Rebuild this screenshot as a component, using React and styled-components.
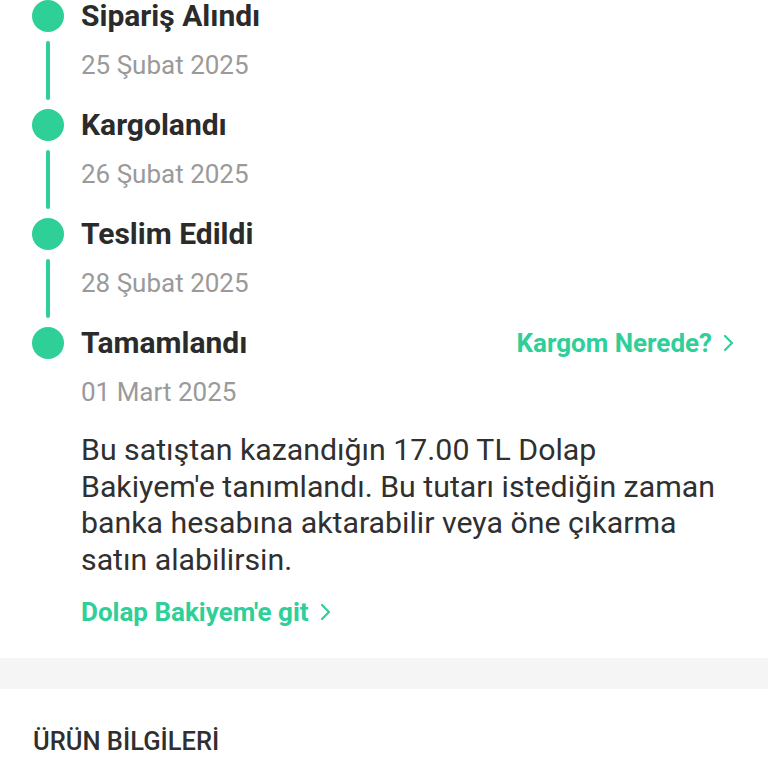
import styled, { createGlobalStyle } from "styled-components";

const green = "#2fcf98";

const GlobalStyle = createGlobalStyle`
  html, body {
    margin: 0;
    padding: 0;
    background: #ffffff;
    font-family: Roboto, "Noto Sans", "Liberation Sans", sans-serif;
  }
`;

const Page = styled.div`
  width: 768px;
  height: 768px;
  overflow: hidden;
  background: #ffffff;
`;

const Timeline = styled.section`
  padding: 0 33px 30px 32px;
`;

const Step = styled.div`
  display: grid;
  grid-template-columns: 32px 1fr;
  column-gap: 17px;
  padding-bottom: ${(p) => (p.$last ? "0" : "28px")};
`;

const Marker = styled.div`
  display: flex;
  flex-direction: column;
  align-items: center;
`;

const Dot = styled.div`
  width: 32px;
  height: 32px;
  border-radius: 50%;
  background: ${green};
  flex-shrink: 0;
`;

const Line = styled.div`
  width: 4px;
  flex: 1;
  margin: 9px 0 -19px;
  border-radius: 2px;
  background: ${green};
`;

const Content = styled.div`
  display: flex;
  flex-direction: column;
`;

const TitleRow = styled.div`
  display: flex;
  align-items: center;
  justify-content: space-between;
  height: 32px;
`;

const Title = styled.h3`
  margin: 0;
  font-size: 30px;
  font-weight: 700;
  color: #2b2b2b;
  line-height: 32px;
`;

const DateText = styled.div`
  margin-top: 17px;
  font-size: 26px;
  line-height: 32px;
  color: #9a9a9a;
`;

const LinkText = styled.a`
  display: inline-flex;
  align-items: center;
  gap: 9px;
  font-size: 26px;
  font-weight: 700;
  color: ${green};
  text-decoration: none;
  line-height: 32px;
`;

const Info = styled.p`
  margin: 24px 0 0;
  max-width: 642px;
  font-size: 30.3px;
  line-height: 36.5px;
  color: #303030;
`;

const Action = styled.div`
  margin-top: 18px;
`;

const Divider = styled.div`
  height: 31px;
  background: #f5f5f5;
`;

const SectionTitle = styled.h2`
  margin: 0;
  padding: 38px 33px 0;
  font-size: 25.5px;
  font-weight: 500;
  color: #2f2f2f;
  line-height: 28px;
`;

const Chevron = () => (
  <svg width="14" height="20" viewBox="0 0 14 20" fill="none">
    <path d="M4 3l7 7-7 7" stroke={green} strokeWidth="2.2" strokeLinecap="round" strokeLinejoin="round" />
  </svg>
);

const steps = [
  { title: "Sipariş Alındı", date: "25 Şubat 2025" },
  { title: "Kargolandı", date: "26 Şubat 2025" },
  { title: "Teslim Edildi", date: "28 Şubat 2025" },
  { title: "Tamamlandı", date: "01 Mart 2025" },
];

const App = () => {
  return (
    <Page>
      <GlobalStyle />
      <Timeline>
        {steps.map((step, idx) => {
          const last = idx === steps.length - 1;
          return (
            <Step key={idx} $last={last}>
              <Marker>
                <Dot />
                {!last && <Line />}
              </Marker>
              <Content>
                <TitleRow>
                  <Title>{step.title}</Title>
                  {last && (
                    <LinkText href="#">
                      Kargom Nerede? <Chevron />
                    </LinkText>
                  )}
                </TitleRow>
                <DateText>{step.date}</DateText>
                {last && (
                  <>
                    <Info>
                      Bu satıştan kazandığın 17.00 TL Dolap Bakiyem'e tanımlandı. Bu tutarı
                      istediğin zaman banka hesabına aktarabilir veya öne çıkarma satın
                      alabilirsin.
                    </Info>
                    <Action>
                      <LinkText href="#">
                        Dolap Bakiyem'e git <Chevron />
                      </LinkText>
                    </Action>
                  </>
                )}
              </Content>
            </Step>
          );
        })}
      </Timeline>
      <Divider />
      <SectionTitle>ÜRÜN BİLGİLERİ</SectionTitle>
    </Page>
  );
};

export default App;
